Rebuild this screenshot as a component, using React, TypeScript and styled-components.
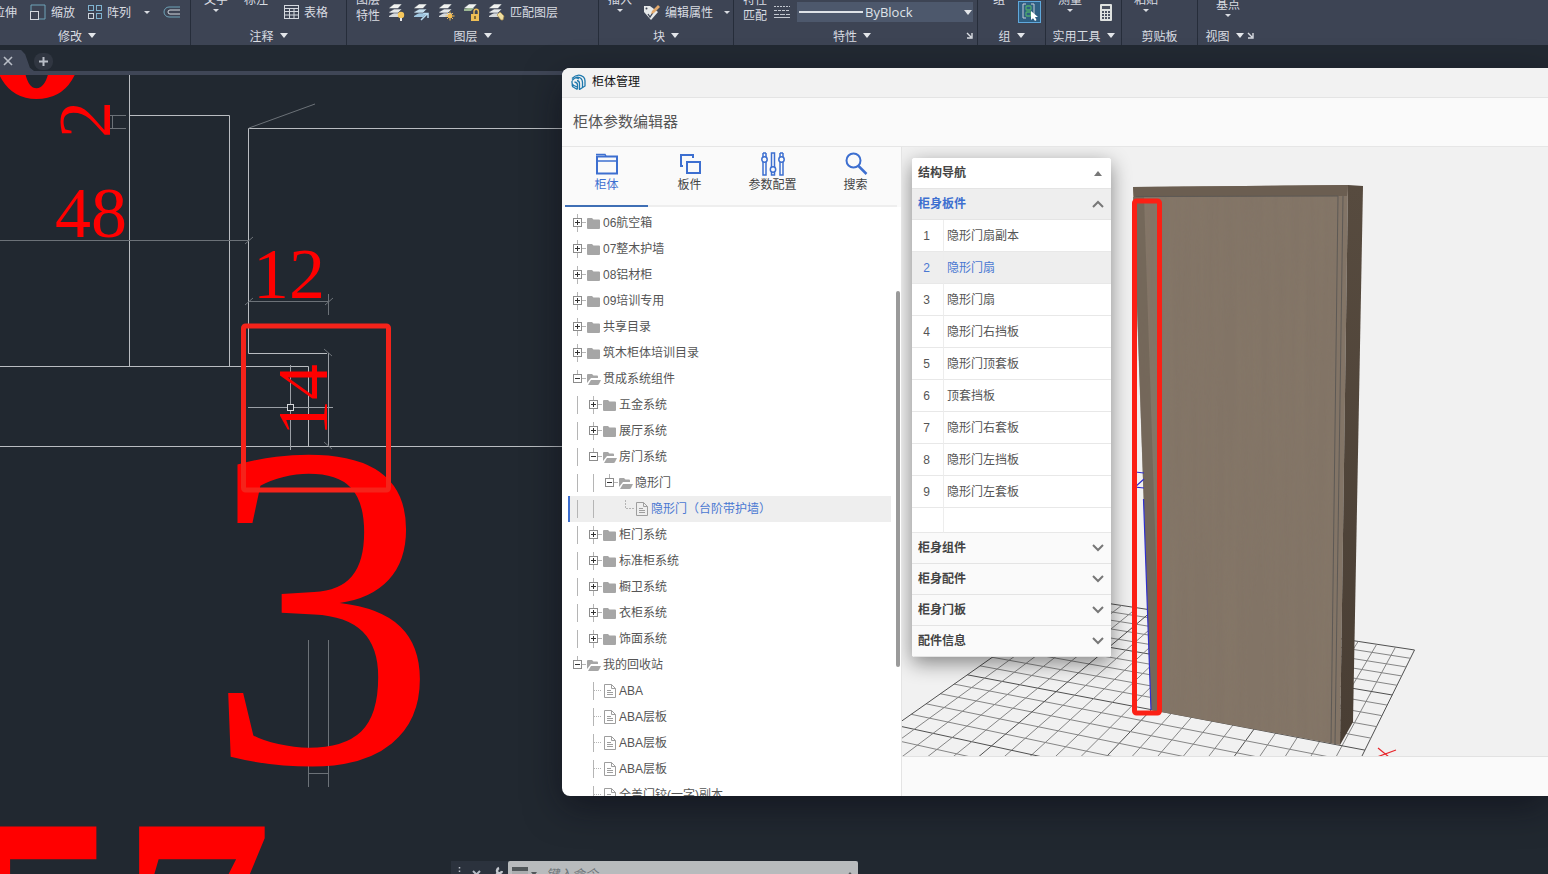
import React from 'react';
import styled, { createGlobalStyle, css } from 'styled-components';

const sans = `'Liberation Sans', 'Noto Sans CJK SC', sans-serif`;
const cjk = `'Noto Sans CJK SC', 'Noto Sans', sans-serif`;

const Global = createGlobalStyle`
  * { box-sizing: border-box; }
  html, body { margin: 0; height: 100%; overflow: hidden; background: #212830; }
  #root { height: 100%; }
  button { font: inherit; color: inherit; background: none; border: 0; padding: 0; margin: 0; text-align: left; cursor: pointer; }
  svg { display: block; flex: none; }
`;

const Desktop = styled.div`
  position: relative;
  height: 100vh;
  display: flex;
  flex-direction: column;
  overflow: hidden;
  background: #212830;
  font: 12px/16px ${cjk};
`;

/* ---------- ribbon ---------- */
const Ribbon = styled.header`
  display: flex;
  height: 45px;
  flex: none;
  background: #3d4454;
  color: #d9dce2;
  overflow: hidden;
`;
const Panel = styled.section<{ $w: number; $bleed?: boolean; $last?: boolean }>`
  flex: none;
  width: ${p => p.$w}px;
  margin-left: ${p => (p.$bleed ? '-36px' : '0')};
  display: flex;
  flex-direction: column;
  border-right: ${p => (p.$last ? '0' : '1px solid #262d3a')};
`;
const Tools = styled.div<{ $pad?: number; $gap: number; $end?: boolean }>`
  display: flex;
  align-items: center;
  justify-content: ${p => (p.$end ? 'flex-end' : 'flex-start')};
  height: 24px;
  gap: ${p => p.$gap}px;
  padding: 0 ${p => (p.$end ? 10 : 4)}px 0 ${p => p.$pad ?? 0}px;
`;
const Tool = styled.button`
  display: flex;
  align-items: center;
  gap: 5px;
  white-space: nowrap;
  flex: none;
`;
const Stack = styled.button<{ $drop: number }>`
  height: 24px;
  flex: none;
  display: flex;
  flex-direction: column;
  justify-content: flex-end;
  align-items: center;
  gap: 2px;
  padding-bottom: ${p => p.$drop}px;
  white-space: nowrap;
`;
const TwoLines = styled.span`
  display: block;
  text-align: center;
`;
const Foot = styled.footer`
  display: flex;
  align-items: center;
  height: 21px;
  padding: 2px 4px 0;
`;
const FootTitle = styled.button`
  flex: 1;
  display: flex;
  align-items: center;
  justify-content: center;
  gap: 6px;
  white-space: nowrap;
`;
const GroupButton = styled.button`
  width: 24px;
  height: 22px;
  display: grid;
  place-items: center;
  border: 1px solid #5fa8dc;
  background: #2f5f83;
`;
const LineType = styled.label`
  flex: 1;
  display: flex;
  align-items: center;
  height: 20px;
  gap: 2px;
  padding: 0 1px 0 2px;
  background: #4d586c;
`;
const LineSelect = styled.select`
  flex: 1;
  min-width: 0;
  appearance: none;
  border: 0;
  padding: 0;
  background: transparent;
  color: #dfe3e8;
  font: 13px/18px 'Open Sans', 'Noto Sans', sans-serif;
`;

const Caret = ({ small }: { small?: boolean }) =>
  small ? (
    <svg width="6" height="3"><path d="M0 0h6L3 3z" fill="#d9dce2" /></svg>
  ) : (
    <svg width="8" height="5"><path d="M0 0h8L4 5z" fill="#e3e6ea" /></svg>
  );
const Launcher = () => (
  <svg width="7" height="7" fill="none" stroke="#d9dce2"><path d="M1 1l4 4M6 1v5H1" strokeWidth="1.4" /></svg>
);
const Title = ({ text, caret = true, launch }: { text: string; caret?: boolean; launch?: boolean }) => (
  <Foot>
    <FootTitle>{text}{caret && <Caret />}</FootTitle>
    {launch && <button aria-label={text + '设置'}><Launcher /></button>}
  </Foot>
);

const Layers = ({ kind }: { kind: string }) => (
  <svg width="17" height="18" viewBox="0 0 17 18">
    {kind !== 'lock' && <>
      <path d="M1 13l5-3h8l-4 4H1z" fill={kind === 'arrow' ? '#9fc6e0' : '#d5d9dc'} />
      <path d="M1 9l5-3h8l-4 4H1z" fill={kind === 'arrow' ? '#c2dcec' : '#e4e7e8'} stroke="#3d4454" strokeWidth=".6" />
    </>}
    <path d="M1 5l5-4h8l-4 4.500H1z" fill="#f0f2f0" stroke="#3d4454" strokeWidth=".5" />
    {kind === 'bulb' && <><circle cx="13" cy="12" r="3.200" fill="#f6c85c" /><path d="M12 15h2v3h-2z" fill="#e8e8e8" /></>}
    {kind === 'arrow' && <path d="M8 17l6-6M10.500 10.500H15V15" fill="none" stroke="#b9dcf2" strokeWidth="1.500" />}
    {kind === 'sun' && <><circle cx="12" cy="13" r="2.200" fill="#f4bd52" /><path d="M12 8.500v9M7.500 13h9M9 10l6 6M15 10l-6 6" stroke="#f4bd52" /></>}
    {kind === 'lock' && <><path d="M1 6l4-1h6l-3 3H1z" fill="#9cb794" /><rect x="8" y="11" width="8" height="7" fill="#efbf55" /><path d="M11 11V8.500a2.200 2.200 0 0 1 4.400 0V11" fill="none" stroke="#efbf55" strokeWidth="1.400" /><path d="M12 13v3" stroke="#5a4a20" strokeWidth="1.400" /></>}
    {kind === 'match' && <path d="M9 12l3-3 4 4-1 4h-2z" fill="#f0dfa0" stroke="#a88a4a" strokeWidth=".7" />}
  </svg>
);

function RibbonBar() {
  return (
    <Ribbon>
      <Panel $w={227} $bleed>
        <Tools $gap={13} $end>
          <Tool>拉伸</Tool>
          <Tool>
            <svg width="16" height="16" fill="none"><path d="M1 7V1h14v14H9" stroke="#6fa3b8" /><rect x=".5" y="7.500" width="8" height="8" stroke="#d5d9df" /></svg>
            缩放
          </Tool>
          <Tool>
            <svg width="14" height="14" fill="none" stroke="#7fb3d0"><rect x=".5" y=".5" width="5" height="5" /><rect x="8.500" y=".5" width="5" height="5" /><rect x=".5" y="8.500" width="5" height="5" stroke="#ccd3da" /><rect x="8.500" y="8.500" width="5" height="5" /></svg>
            阵列
          </Tool>
          <Tool aria-label="更多阵列"><Caret small /></Tool>
          <Tool aria-label="偏移">
            <svg width="17" height="12" fill="none"><path d="M17 1H6a5 5 0 0 0 0 10h11" stroke="#6fa3b8" /><path d="M17 4H7a2 2 0 0 0 0 4h10" stroke="#d5d9df" /></svg>
          </Tool>
        </Tools>
        <Title text="修改" />
      </Panel>
      <Panel $w={156}>
        <Tools $gap={16} $pad={13}>
          <Stack $drop={12}>文字<Caret small /></Stack>
          <Stack $drop={17}>标注</Stack>
          <Tool>
            <svg width="15" height="14" fill="none" stroke="#d5d9df"><rect x=".5" y=".5" width="14" height="13" /><path d="M0 3.500h15M0 6.500h15M0 10h15M5.500 3v11M10 3v11" /></svg>
            表格
          </Tool>
        </Tools>
        <Title text="注释" />
      </Panel>
      <Panel $w={252}>
        <Tools $gap={8} $pad={9}>
          <Stack $drop={1}><TwoLines>图层<br />特性</TwoLines></Stack>
          <Tool aria-label="关闭图层"><Layers kind="bulb" /></Tool>
          <Tool aria-label="置为当前"><Layers kind="arrow" /></Tool>
          <Tool aria-label="冻结图层"><Layers kind="sun" /></Tool>
          <Tool aria-label="锁定图层"><Layers kind="lock" /></Tool>
          <Tool><Layers kind="match" />匹配图层</Tool>
        </Tools>
        <Title text="图层" />
      </Panel>
      <Panel $w={135}>
        <Tools $gap={11} $pad={9}>
          <Stack $drop={12}>插入<Caret small /></Stack>
          <Tool>
            <svg width="17" height="17" viewBox="0 0 17 17"><path d="M1 2h6l8 6-7 8-7-8z" fill="#e6e9ea" /><circle cx="3.500" cy="4.500" r="1" fill="#3d4454" /><path d="M5 10l2 3 4-6" fill="none" stroke="#3d4454" strokeWidth="1.300" /><path d="M9 7l6-6 2 2-6 6-3 1z" fill="#e2a86a" /></svg>
            编辑属性
          </Tool>
          <Tool aria-label="更多属性"><Caret small /></Tool>
        </Tools>
        <Title text="块" />
      </Panel>
      <Panel $w={244}>
        <Tools $gap={7} $pad={9}>
          <Stack $drop={1}><TwoLines>特性<br />匹配</TwoLines></Stack>
          <svg width="16" height="14" stroke="#c3c8d0"><path d="M0 1.500h16" strokeDasharray="2 1" /><path d="M0 5.500h16" strokeDasharray="3 1" /><path d="M0 9.500h16" strokeDasharray="5 1" /><path d="M0 12.500h16" /></svg>
          <LineType>
            <svg width="64" height="2"><path d="M0 0h64v2H0z" fill="#dfe3e8" /></svg>
            <LineSelect aria-label="线型" defaultValue="ByBlock"><option>ByBlock</option></LineSelect>
            <Caret />
          </LineType>
        </Tools>
        <Title text="特性" launch />
      </Panel>
      <Panel $w={68}>
        <Tools $gap={13} $pad={15}>
          <Stack $drop={17}>组</Stack>
          <GroupButton aria-label="组选择">
            <svg width="18" height="18" viewBox="0 0 18 18" fill="none"><path d="M5 1H2v14h3M10 1h3v14h-3" stroke="#c9ced6" /><rect x="5" y="3" width="5" height="4" rx="1" stroke="#4ea96d" strokeWidth="1.300" /><rect x="5" y="9" width="5" height="4" rx="1" stroke="#4ea96d" strokeWidth="1.300" /><path d="M10 8v9l2-2 2 3 1.500-1-1.500-3h3z" fill="#fff" /></svg>
          </GroupButton>
        </Tools>
        <Title text="组" />
      </Panel>
      <Panel $w={76}>
        <Tools $gap={18} $pad={12}>
          <Stack $drop={12}>测量<Caret small /></Stack>
          <Tool aria-label="计算器">
            <svg width="12" height="17"><rect width="12" height="17" rx="1" fill="#dfe2e0" /><path d="M2 2h8v3H2z" fill="#4a5160" /><path d="M2 8h8M2 11h8M2 14h8" stroke="#4a5160" strokeWidth="2" strokeDasharray="2 1" /></svg>
          </Tool>
        </Tools>
        <Title text="实用工具" />
      </Panel>
      <Panel $w={76}>
        <Tools $gap={8} $pad={12}>
          <Stack $drop={12}>粘贴<Caret small /></Stack>
        </Tools>
        <Title text="剪贴板" caret={false} />
      </Panel>
      <Panel $w={60} $last>
        <Tools $gap={8} $pad={18}>
          <Stack $drop={7}>基点<Caret small /></Stack>
        </Tools>
        <Title text="视图" launch />
      </Panel>
    </Ribbon>
  );
}

/* ---------- drawing tabs and canvas ---------- */
const FileTabs = styled.nav`
  display: flex;
  align-items: flex-end;
  height: 30px;
  flex: none;
  background: #222932;
  border-bottom: 4px solid #3f4656;
`;
const FileTab = styled.button`
  width: 34px;
  height: 21px;
  padding-left: 3px;
  display: flex;
  align-items: center;
  background: #3f4656;
  clip-path: polygon(0 0, 62% 0, 74% 20%, 88% 85%, 100% 100%, 0 100%);
`;
const AddTab = styled.button`
  width: 19px;
  height: 17px;
  margin-bottom: 1px;
  border-radius: 8px;
  display: grid;
  place-items: center;
  background: #303641;
`;
const Canvas = styled.main`
  position: relative;
  flex: 1;
  min-height: 0;
  overflow: hidden;
`;
const Drawing = styled.svg`
  width: 100%;
  height: 100%;
`;
const digits = `'Liberation Serif', serif`;

function CadDrawing() {
  return (
    <Drawing>
      <g transform="translate(0 -75)">
        <g fill="none" stroke="#b9bdc1" strokeWidth="1">
          <path d="M129.500 75V367M129.500 115.500H229.500V367M0 366.500H308.500V446M248.500 128.500V353.500H327M248.500 128.500H562M0 446.500H562" />
          <path d="M328.500 353V446M290.500 365V450M248 407.500H333" stroke="#9a9fa5" />
        </g>
        <g fill="none" stroke="#6c7278">
          <path d="M0 240.500H249M249 301.500H329M328.500 294V315M249 128L315 104M112.500 115V128M110 115.500H126M110 128.500H126" />
          <path d="M245 244l8-7M245 305l8-7M325 305l8-7M324 349l8 7M324 442l8 7" />
          <path d="M308.500 640V787M328.500 640V787M308 773.500H329" />
        </g>
        <g fill="#ff0000" fontFamily={digits}>
          <text x="-18" y="97" fontSize="220" fontWeight="700">0</text>
          <text x="55" y="237" fontSize="72">48</text>
          <text x="253" y="298" fontSize="72">12</text>
          <text transform="translate(110 138) rotate(-90)" fontSize="74">2</text>
          <text transform="translate(327 436) rotate(-90)" fontSize="72">14</text>
          <text x="206" y="762" fontSize="464">3</text>
          <text x="-28" y="1023" fontSize="300" fontWeight="700">57</text>
        </g>
        <rect x="287.500" y="404.500" width="6" height="6" fill="#212830" stroke="#d5d8db" />
        <rect x="243.500" y="326" width="145" height="164" rx="2" fill="none" stroke="#f5231a" strokeWidth="5" />
      </g>
    </Drawing>
  );
}

const CommandBar = styled.form`
  position: absolute;
  left: 451px;
  bottom: -13px;
  width: 407px;
  height: 26px;
  display: flex;
  background: #2b323d;
`;
const CommandTools = styled.div`
  width: 57px;
  display: flex;
  align-items: center;
  justify-content: space-between;
  padding: 0 5px 0 7px;
`;
const CommandField = styled.label`
  flex: 1;
  display: flex;
  align-items: center;
  gap: 8px;
  padding: 0 4px;
  border-radius: 2px 2px 0 0;
  background: #b8bbbd;
`;
const CommandInput = styled.input`
  flex: 1;
  min-width: 0;
  border: 0;
  padding: 0;
  outline: 0;
  background: transparent;
  font: italic 13px/20px ${cjk};
  &::placeholder { color: #6f7579; opacity: 1; }
`;

/* ---------- cabinet window ---------- */
const Dialog = styled.section`
  position: absolute;
  left: 562px;
  top: 68px;
  right: 0;
  bottom: 78px;
  display: flex;
  flex-direction: column;
  overflow: hidden;
  border-radius: 8px 0 0 8px;
  background: #fff;
  color: #555;
  font-family: ${sans};
`;
const DialogShade = styled.div`
  position: absolute;
  left: 562px;
  top: 72px;
  right: 0;
  bottom: 78px;
  border-radius: 8px;
  box-shadow: 0 10px 36px rgba(10, 10, 20, 0.55);
`;
const TitleBar = styled.header`
  flex: none;
  height: 30px;
  display: flex;
  align-items: center;
  gap: 6px;
  padding: 0 9px 2px;
  background: #f2f2f2;
  border-bottom: 1px solid #e4e4e4;
  color: #111;
`;
const Heading = styled.h1`
  flex: none;
  height: 49px;
  margin: 0;
  padding: 0 11px;
  font-size: 15px;
  line-height: 48px;
  font-weight: 400;
  background: #fafafa;
  border-bottom: 1px solid #e6e6e6;
`;
const Body = styled.div`
  flex: 1;
  min-height: 0;
  display: flex;
`;
const Sidebar = styled.aside`
  width: 340px;
  flex: none;
  display: flex;
  flex-direction: column;
  border-right: 1px solid #e4e4e4;
`;
const Tabs = styled.div`
  flex: none;
  height: 60px;
  display: grid;
  grid-template-columns: repeat(4, 1fr);
  padding: 0 4px 0 3px;
  background: #fafafa;
`;
const Tab = styled.button<{ $on?: boolean }>`
  display: flex;
  flex-direction: column;
  align-items: center;
  gap: 1px;
  padding-top: 5px;
  color: ${p => (p.$on ? '#3d6fd0' : '#444')};
  border-bottom: 2px solid ${p => (p.$on ? '#3f6fb5' : '#eeeeee')};
  line-height: 16px;
`;
const TreeArea = styled.div`
  flex: 1;
  min-height: 0;
  display: flex;
  padding: 3px 1px 1px 6px;
  overflow: hidden;
`;
const Tree = styled.ul`
  flex: 1;
  min-width: 0;
  margin: 0 5px 0 0;
  padding: 0;
  list-style: none;
`;
const ScrollTrack = styled.div`
  width: 4px;
  padding-top: 81px;
`;
const ScrollThumb = styled.div`
  height: 376px;
  border-radius: 2px;
  background: #9a9a9a;
`;
const TreeRow = styled.button<{ $on?: boolean }>`
  display: flex;
  align-items: center;
  width: 100%;
  height: 26px;
  border-left: 2px solid transparent;
  white-space: nowrap;
  ${p => p.$on && css`
    color: #4a78d2;
    background: #eeeeee;
    border-left-color: #3d6fd0;
  `}
`;
const TreeText = styled.span`
  padding-left: 1px;
`;

type Node = { d: string; t: string; on?: boolean };
/* d: one mark per 16px cell. | guide, space, + closed, - open, T tee, L corner */
const nodes: Node[] = [
  { d: '+', t: '06航空箱' },
  { d: '+', t: '07整木护墙' },
  { d: '+', t: '08铝材柜' },
  { d: '+', t: '09培训专用' },
  { d: '+', t: '共享目录' },
  { d: '+', t: '筑木柜体培训目录' },
  { d: '-', t: '贯成系统组件' },
  { d: '|+', t: '五金系统' },
  { d: '|+', t: '展厅系统' },
  { d: '|-', t: '房门系统' },
  { d: '||-', t: '隐形门' },
  { d: '|| L', t: '隐形门（台阶带护墙）', on: true },
  { d: '|+', t: '柜门系统' },
  { d: '|+', t: '标准柜系统' },
  { d: '|+', t: '橱卫系统' },
  { d: '|+', t: '衣柜系统' },
  { d: '|+', t: '饰面系统' },
  { d: '-', t: '我的回收站' },
  { d: ' T', t: 'ABA' },
  { d: ' T', t: 'ABA层板' },
  { d: ' T', t: 'ABA层板' },
  { d: ' T', t: 'ABA层板' },
  { d: ' T', t: '全盖门铰(一字)副本' },
];

function Cell({ k }: { k: string }) {
  return (
    <svg width="16" height="18" fill="none" stroke="#b5b5b5">
      {(k === '|' || k === 'T') && <path d="M7.500 0v18" />}
      {k === 'T' && <path d="M8 8.500h8" strokeDasharray="1 1" />}
      {k === 'L' && <path d="M7.500 0v8.500h8.500" strokeDasharray="2 1" />}
      {(k === '+' || k === '-') && <>
        <path d="M7.500 0v4M12 8.500h4" />
        {k === '+' && <path d="M7.500 13v5" />}
        <rect x="3.500" y="4.500" width="8" height="8" fill="#fff" stroke="#8c8c8c" />
        <path d={k === '+' ? 'M5 8.500h5M7.500 6v5' : 'M5 8.500h5'} stroke="#333" />
      </>}
    </svg>
  );
}
function NodeIcon({ k }: { k: string }) {
  if (k === '+') return <svg width="16" height="16"><path d="M1 4q0-1 1-1h4l1.500 1.500H13q1 0 1 1V13q0 1-1 1H2q-1 0-1-1z" fill="#a6a6a6" /></svg>;
  if (k === '-') return <svg width="16" height="16"><path d="M1 12V4q0-1 1-1h4l1.500 1.500H11q1 0 1 1V7H5z" fill="#a6a6a6" /><path d="M2 14l3-5h10l-2 4q-.5 1-1.500 1z" fill="#a6a6a6" /></svg>;
  return (
    <svg width="16" height="16" fill="none" stroke="#9e9e9e"><path d="M2.500 1.500h7l4 4v9h-11z" /><path d="M9.500 1.500v4h4M5 7.500h4M5 9.500h6M5 11.500h6" /></svg>
  );
}

const blue = '#3d6fd0';
const TabIcons = [
  <svg key="a" width="24" height="24" fill="none" stroke={blue} strokeWidth="2"><path d="M2 4.500h20v17H2z" /><path d="M2 9h20" strokeWidth="1.500" /><path d="M1 2.500h9l1 2" strokeWidth="1.500" /></svg>,
  <svg key="b" width="24" height="24" fill="none" stroke={blue} strokeWidth="2"><path d="M5 14H3V3h12v3" /><path d="M9 10h13v11H9z" /></svg>,
  <svg key="c" width="26" height="24" fill="none" stroke={blue} strokeWidth="1.500"><path d="M3 1v4M6 1v4M3 10v13h3V10M11.500 15V1h3v14M11.500 20v3h3v-3M20 1v4M23 1v4M20 10v13h3V10M3 1h3M20 1h3" /><circle cx="4.500" cy="7.500" r="2.700" /><circle cx="13" cy="17.500" r="2.700" /><circle cx="21.500" cy="7.500" r="2.700" /></svg>,
  <svg key="d" width="24" height="24" fill="none" stroke={blue} strokeWidth="2"><circle cx="9.500" cy="8.500" r="7" /><path d="M14.500 14l8 8" strokeWidth="2.500" /></svg>,
];
const tabNames = ['柜体', '板件', '参数配置', '搜索'];

/* ---------- 3D view ---------- */
const ViewColumn = styled.div`
  flex: 1;
  min-width: 0;
  display: flex;
  flex-direction: column;
`;
const Viewer = styled.div`
  position: relative;
  flex: 1;
  min-height: 0;
  overflow: hidden;
  background: #f1f1f1;
`;
const Status = styled.footer`
  flex: none;
  height: 40px;
  background: #fafafa;
  border-top: 1px solid #e2e2e2;
`;

type P = [number, number];
const horizon = 205;
const base = 756;
const cross = (a: number, b: number): P => {
  const ax = 1635, bx = -1513;
  const t = (ax - bx) / ((b - bx) - (a - ax));
  return [ax + (a - ax) * t, horizon + (base - horizon) * t];
};
const floor = Array.from({ length: 21 }, (_, i) => i).flatMap(i => {
  const a = 1362 - 25.5 * i;
  const b = 2112 - 71.6 * i;
  return [
    { key: 'a' + i, p: cross(a, 2112), q: cross(a, 680), strong: i % 5 === 0 },
    { key: 'b' + i, p: cross(1362, b), q: cross(852, b), strong: i % 5 === 0 },
  ];
});

function Scene() {
  return (
    <Drawing>
      <defs>
        <filter id="grain" x="0" y="0" width="1" height="1">
          <feTurbulence type="fractalNoise" baseFrequency="0.12 0.004" numOctaves="3" seed="4" />
          <feColorMatrix values="0 0 0 0 0.24  0 0 0 0 0.19  0 0 0 0 0.14  0.9 0 0 0 -0.3" />
          <feComposite in2="SourceGraphic" operator="in" />
        </filter>
        <linearGradient id="side" x1="0" y1="0" x2="0" y2="1">
          <stop offset="0" stopColor="#574b3f" /><stop offset="1" stopColor="#493e34" />
        </linearGradient>
      </defs>
      <g transform="translate(-902 -147)">
        {floor.map(l => (
          <line key={l.key} x1={l.p[0]} y1={l.p[1]} x2={l.q[0]} y2={l.q[1]} stroke={l.strong ? '#4f4f4f' : '#858585'} strokeWidth="1" />
        ))}
        <path d="M1377 757l19-7M1378 748l11 9" stroke="#e8252a" strokeWidth="1.200" />
        <path d="M1133 187L1348 185 1340 745 1151 710z" fill="#827466" />
        <path d="M1133 187L1348 185 1340 745 1151 710z" fill="#000" filter="url(#grain)" />
        <path d="M1133 187L1348 185 1347 196 1134 197z" fill="#6b5e51" />
        <path d="M1133 197h11L1161 712 1151 710z" fill="#6d6256" opacity=".7" />
        <path d="M1348 185L1363 186 1353 722 1340 745z" fill="url(#side)" />
        <path d="M1136 196.500L1338 196 1331 743M1343 196L1335 744" fill="none" stroke="#5d5955" />
        <path d="M1135 472l9 1M1144 479l-9 8 9 1M1143.500 499L1151 710" fill="none" stroke="#2f2fd0" strokeWidth="1.200" />
        <rect x="1134.500" y="201" width="25" height="512" rx="2" fill="none" stroke="#fb2015" strokeWidth="5" />
      </g>
    </Drawing>
  );
}

const Nav = styled.aside`
  position: absolute;
  left: 10px;
  top: 11px;
  width: 199px;
  border-radius: 3px;
  overflow: hidden;
  background: #fff;
`;
const NavShade = styled.div`
  position: absolute;
  left: 10px;
  top: 11px;
  width: 199px;
  height: 499px;
  border-radius: 3px;
  box-shadow: 0 6px 20px rgba(0, 0, 0, 0.45);
`;
const NavHead = styled.button<{ $tone?: 'top' | 'on' }>`
  display: flex;
  align-items: center;
  justify-content: space-between;
  width: 100%;
  height: 31px;
  padding: 0 7px 0 6px;
  font-weight: 700;
  color: ${p => (p.$tone === 'on' ? '#3d6fd0' : '#444')};
  background: ${p => (p.$tone === 'on' ? '#eeeeee' : p.$tone === 'top' ? '#fff' : '#fafafa')};
  border-bottom: 1px solid #e4e4e4;
`;
const Parts = styled.table`
  width: 100%;
  border-collapse: separate;
  border-spacing: 0;
  table-layout: fixed;
`;
const PartRow = styled.tr<{ $on?: boolean }>`
  height: 32px;
  color: ${p => (p.$on ? '#4a78d2' : '#555')};
  background: ${p => (p.$on ? '#eeeeee' : '#fff')};
`;
const Num = styled.td`
  width: 32px;
  padding: 0 2px 0 0;
  text-align: center;
  border-right: 1px solid #ededed;
  border-bottom: 1px solid #e8e8e8;
`;
const Name = styled.td`
  padding: 0 3px;
  border-bottom: 1px solid #e8e8e8;
`;
const Blank = styled.tr`
  height: 25px;
`;
const Chevron = ({ up }: { up?: boolean }) => (
  <svg width="12" height="8" fill="none" stroke="#777" strokeWidth="2"><path d={up ? 'M1 7l5-5 5 5' : 'M1 1l5 5 5-5'} /></svg>
);

const parts = ['隐形门扇副本', '隐形门扇', '隐形门扇', '隐形门右挡板', '隐形门顶套板', '顶套挡板', '隐形门右套板', '隐形门左挡板', '隐形门左套板'];

function Structure() {
  return (
    <>
      <NavShade />
      <Nav>
        <NavHead $tone="top">结构导航<svg width="12" height="5"><path d="M2 5l4-5 4 5z" fill="#777" /></svg></NavHead>
        <NavHead $tone="on">柜身板件<Chevron up /></NavHead>
        <Parts>
          <tbody>
            {parts.map((n, i) => (
              <PartRow key={i} $on={i === 1}><Num>{i + 1}</Num><Name>{n}</Name></PartRow>
            ))}
            <Blank><Num /><Name /></Blank>
          </tbody>
        </Parts>
        {['柜身组件', '柜身配件', '柜身门板', '配件信息'].map(s => (
          <NavHead key={s}>{s}<Chevron /></NavHead>
        ))}
      </Nav>
    </>
  );
}

const Logo = () => (
  <svg width="15" height="16" viewBox="0 0 15 16" fill="none" stroke="#1f79ad" strokeWidth="1.300">
    <path d="M1 4.500Q7-1.500 12.500 3q1.500 1.500 1.500 4v5L8.500 15.500V9.500Q8.500 7 6 6.500" />
    <path d="M1 6.500Q6 1 10 4.500q1.500 1.500 1.500 4v5M3 4.500q2-1.500 5 .5" />
    <path d="M1 7v2q0 1.500 2 2.500l3 1.500M1 10.500q0 2 2 3l3.500 2M3.500 8q3 .5 3 3v4" />
  </svg>
);

export default function App() {
  return (
    <Desktop>
      <Global />
      <RibbonBar />
      <FileTabs>
        <FileTab aria-label="关闭"><svg width="10" height="10" stroke="#b9bec7" strokeWidth="1.600"><path d="M1 1l8 8M9 1L1 9" /></svg></FileTab>
        <AddTab aria-label="新建"><svg width="9" height="9" stroke="#b9bec7" strokeWidth="2"><path d="M4.500 0v9M0 4.500h9" /></svg></AddTab>
      </FileTabs>
      <Canvas>
        <CadDrawing />
        <CommandBar>
          <CommandTools>
            <svg width="3" height="14" stroke="#b9bec7" strokeWidth="1.500"><path d="M1.500 0v14" strokeDasharray="1.500 2" /></svg>
            <svg width="9" height="9" stroke="#b9bec7" strokeWidth="2"><path d="M1 1l7 7M8 1L1 8" /></svg>
            <svg width="12" height="16" viewBox="0 0 12 16" fill="none" stroke="#c4c8ce" strokeWidth="2.500"><path d="M11 5a3 3 0 0 1-4 2L1 14M7 7a3 3 0 0 1 1-5" /></svg>
          </CommandTools>
          <CommandField>
            <svg width="26" height="16"><path d="M0 1h16v14H0z" fill="#a9acae" /><path d="M0 1h16v4H0z" fill="#51575a" /><path d="M19 6h6l-3 4z" fill="#51575a" /></svg>
            <CommandInput aria-label="命令" placeholder="键入命令" />
            <svg width="8" height="5"><path d="M0 5h8L4 0z" fill="#51575a" /></svg>
          </CommandField>
        </CommandBar>
      </Canvas>
      <DialogShade />
      <Dialog>
        <TitleBar><Logo />柜体管理</TitleBar>
        <Heading>柜体参数编辑器</Heading>
        <Body>
          <Sidebar>
            <Tabs role="tablist">
              {tabNames.map((n, i) => (
                <Tab key={n} role="tab" aria-selected={i === 0} $on={i === 0}>{TabIcons[i]}{n}</Tab>
              ))}
            </Tabs>
            <TreeArea>
              <Tree>
                {nodes.map((n, i) => (
                  <li key={i}>
                    <TreeRow $on={n.on}>
                      {n.d.split('').map((k, j) => <Cell key={j} k={k} />)}
                      <NodeIcon k={n.d[n.d.length - 1]} />
                      <TreeText>{n.t}</TreeText>
                    </TreeRow>
                  </li>
                ))}
              </Tree>
              <ScrollTrack><ScrollThumb /></ScrollTrack>
            </TreeArea>
          </Sidebar>
          <ViewColumn>
            <Viewer>
              <Scene />
              <Structure />
            </Viewer>
            <Status />
          </ViewColumn>
        </Body>
      </Dialog>
    </Desktop>
  );
}
